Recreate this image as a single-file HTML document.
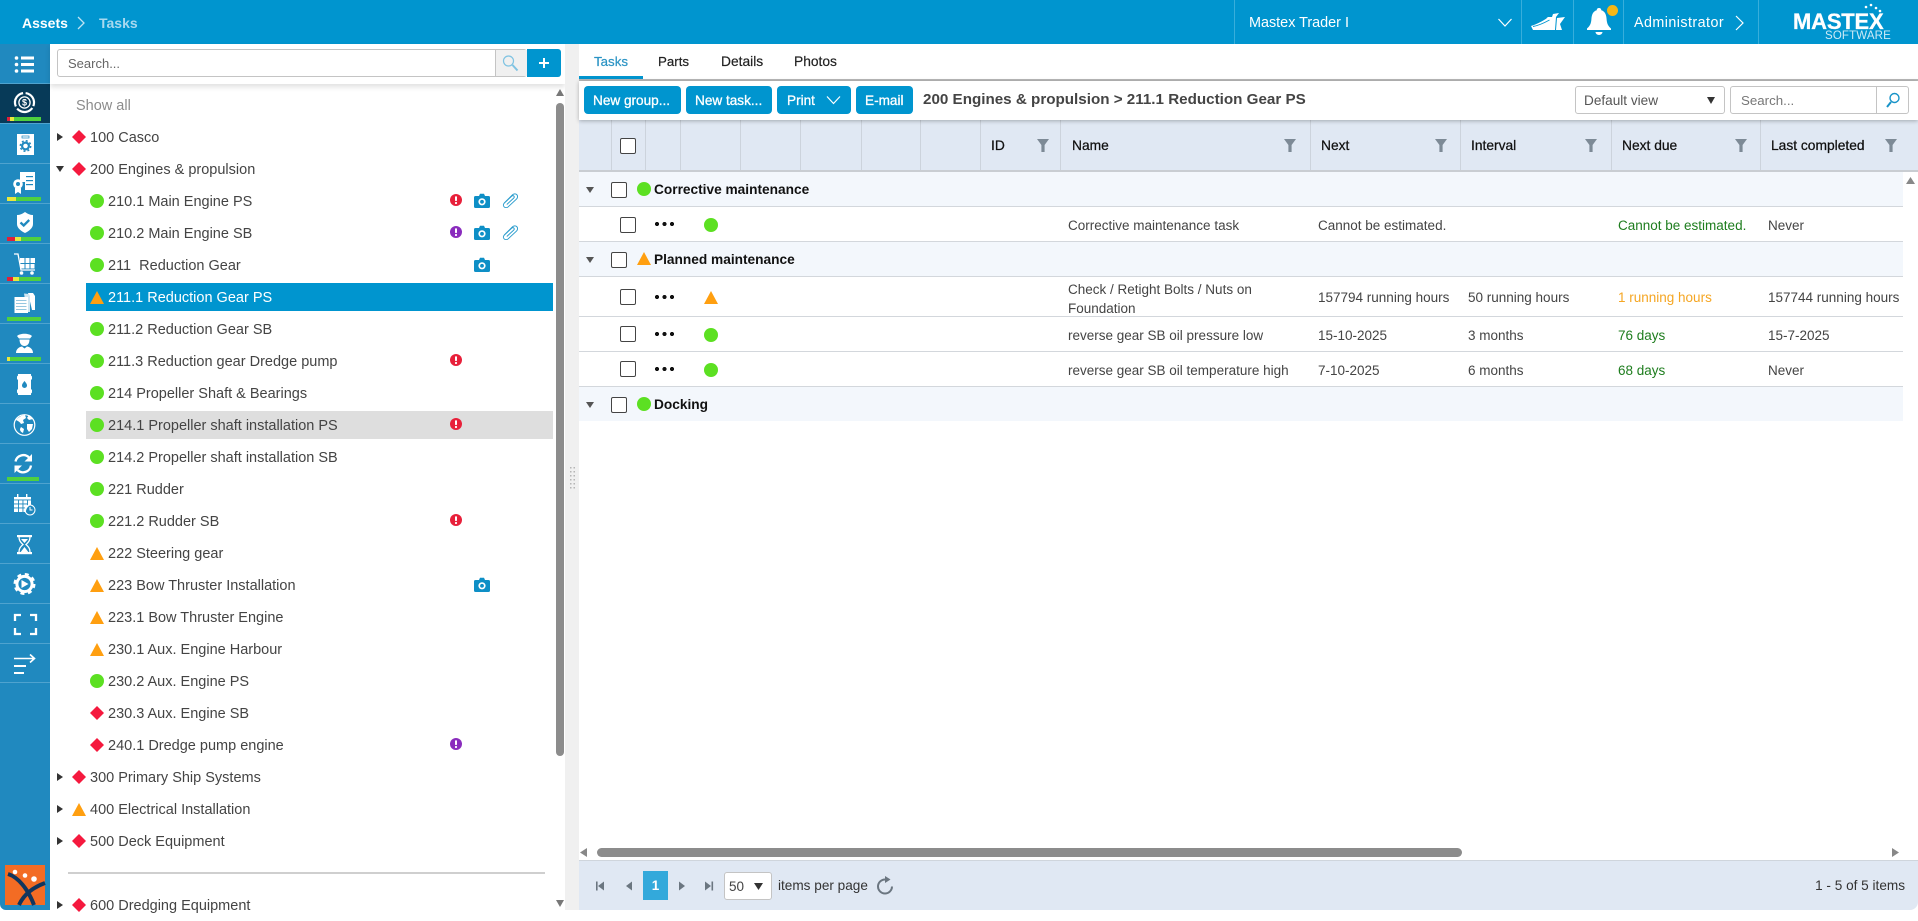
<!DOCTYPE html>
<html lang="en">
<head>
<meta charset="utf-8">
<title>Assets - Tasks</title>
<style>
*{box-sizing:border-box}
html,body{margin:0;padding:0;width:1918px;height:910px;overflow:hidden;background:#fff;font-family:"Liberation Sans",sans-serif;color:#444}
.a{position:absolute}
.t{position:absolute;white-space:nowrap;height:20px;line-height:20px}
.row{position:absolute;left:0;width:560px;height:32px;font-size:14.5px;color:#444}
.row span{position:absolute;left:108px;top:7px;line-height:20px;white-space:nowrap}
.row.root span{left:90px}
.row i{position:absolute;left:90px;top:9px;width:14px;height:14px;display:block}
.row.root i{left:72px}
.row i.o{top:10px;height:13px}
.g{background:#5ce022;border-radius:50%}
.o{background:#ff9f10;clip-path:polygon(50% 0,100% 100%,0 100%)}
.d{background:#f5193e;clip-path:polygon(50% 0,100% 50%,50% 100%,0 50%)}
.row b{position:absolute;left:57px;top:12px;width:6px;height:8px;background:#333;clip-path:polygon(0 0,100% 50%,0 100%)}
.row b.x{left:56px;top:13px;width:8px;height:6px;clip-path:polygon(0 0,100% 0,50% 100%)}
.row svg{position:absolute}
.ex{left:450px;top:9px;width:12px;height:12px}
.cam{left:474px;top:8px;width:16px;height:15px}
.clip{left:502px;top:8px;width:16px;height:15px}
.btn{position:absolute;top:86px;height:28px;background:#0095cf;border-radius:4px;color:#fff;font-size:13.6px;line-height:30px;-webkit-text-stroke:.3px #fff;white-space:nowrap}
.vl{position:absolute;top:120px;width:1px;height:50px;background:#ccd3dc}
.hd{position:absolute;top:136px;font-size:13.8px;line-height:20px;color:#111;-webkit-text-stroke:.25px #111;white-space:nowrap}
.fl{position:absolute;top:139px;width:12px;height:13px}
.cb{position:absolute;width:16px;height:16px;border:1.3px solid #444;border-radius:2px;background:#fff}
.grp{position:absolute;left:579px;width:1324px;background:#f3f7fc;border-bottom:1px solid #d3d7dc}
.line{position:absolute;left:579px;width:1324px;height:1px;background:#d3d7dc}
.gt{position:absolute;left:654px;font-size:13.7px;font-weight:bold;color:#111;line-height:20px;white-space:nowrap}
.c{position:absolute;font-size:13.5px;line-height:19px;color:#444;white-space:nowrap}
.gn{color:#1e7d1e}
.or{color:#f5a623}
.dots{position:absolute;left:655px;width:20px;height:4px;background:radial-gradient(circle at 2px 2px,#111 2px,transparent 2.2px) 0 0/7.5px 4px repeat-x}
.ei{position:absolute;left:704px;width:14px;height:14px}
.ge{position:absolute;left:637px;width:14px;height:14px}
.tri{position:absolute;background:#555;width:8px;height:6px;left:586px;clip-path:polygon(0 0,100% 0,50% 100%)}
.ar{position:absolute;background:#777}
</style>
</head>
<body>
<svg width="0" height="0" style="position:absolute">
<defs>
<symbol id="exr" viewBox="0 0 12 12"><circle cx="6" cy="6" r="6" fill="#e8203a"/><rect x="5" y="2.2" width="2" height="4.8" rx=".8" fill="#fff"/><circle cx="6" cy="9" r="1.1" fill="#fff"/></symbol>
<symbol id="exp" viewBox="0 0 12 12"><circle cx="6" cy="6" r="6" fill="#8a2cbd"/><rect x="5" y="2.2" width="2" height="4.8" rx=".8" fill="#fff"/><circle cx="6" cy="9" r="1.1" fill="#fff"/></symbol>
<symbol id="cam" viewBox="0 0 16 15"><path d="M1.5 3H5L6 .8h4L11 3h3.5A1.5 1.5 0 0 1 16 4.5v9a1.5 1.5 0 0 1-1.5 1.5h-13A1.5 1.5 0 0 1 0 13.5v-9A1.5 1.5 0 0 1 1.5 3z" fill="#0e8fc6"/><circle cx="8" cy="8.8" r="3.6" fill="#fff"/><circle cx="8" cy="8.8" r="1.9" fill="#0e8fc6"/></symbol>
<symbol id="clip" viewBox="0 0 16 15.500"><path d="M2.200 10.200 10.400 2C11.800.6 14 .6 15.100 1.800 16.200 3 16 5 14.600 6.400L6 14.400C4.800 15.400 3 15.400 1.900 14.300.8 13.200 1 11.600 2 10.500L9.800 3.200C10.500 2.600 11.500 2.600 12 3.200 12.500 3.800 12.400 4.700 11.800 5.300L5 11.600" fill="none" stroke="#2a9ccd" stroke-width="1" stroke-linecap="round"/></symbol>
<symbol id="fil" viewBox="0 0 12 13"><path d="M0 0h12L7.6 6v7H4.4V6z" fill="#7d8a96"/></symbol>
</defs>
</svg>

<!-- top bar -->
<div class="a" style="left:0;top:0;width:1918px;height:44px;background:#0095cf"></div>
<div class="t" style="left:22px;top:12.500px;font-size:14px;font-weight:bold;color:#fff">Assets</div>
<svg class="a" style="left:76px;top:15px" width="10" height="16" viewBox="0 0 10 16"><path d="M2 2l6 6-6 6" fill="none" stroke="#bfe3f3" stroke-width="1.3"/></svg>
<div class="t" style="left:99px;top:12.500px;font-size:14px;font-weight:bold;color:#a9d9ef">Tasks</div>
<div class="a" style="left:1234px;top:0;width:1px;height:44px;background:#38aedb"></div>
<div class="a" style="left:1521px;top:0;width:1px;height:44px;background:#38aedb"></div>
<div class="a" style="left:1573px;top:0;width:1px;height:44px;background:#38aedb"></div>
<div class="a" style="left:1623px;top:0;width:1px;height:44px;background:#38aedb"></div>
<div class="a" style="left:1758px;top:0;width:1px;height:44px;background:#38aedb"></div>
<div class="t" style="left:1249px;top:13px;font-size:14.4px;color:#fff">Mastex Trader I</div>
<svg class="a" style="left:1497px;top:17px" width="16" height="11" viewBox="0 0 16 11"><path d="M1.5 2l6.5 7 6.500-7" fill="none" stroke="#fff" stroke-width="1.200"/></svg>
<svg class="a" style="left:1530px;top:12px" width="36" height="20" viewBox="0 0 36 20"><path d="M1 14C7 12 13 9 18 5l4 0 1-3 6-1-3 4-1 13H3z" fill="#fff"/><path d="M27 6l8-1-5 7 2 6h-6z" fill="#fff"/><path d="M3 14.500C9 13.500 14 11 19.500 8M8 10.500C11 9.500 14 7.500 16.500 6" stroke="#0095cf" stroke-width=".9" fill="none"/></svg>
<svg class="a" style="left:1586px;top:7px" width="26" height="29" viewBox="0 0 26 29"><path d="M13 1c1.500 0 2.300 1 2.300 2.200 4 1.200 5 4.800 5.300 9 .3 4.500 1.700 7 4.400 9.300v1.500H1v-1.500c2.700-2.300 4.100-4.800 4.400-9.300.3-4.200 1.300-7.800 5.300-9C10.700 2 11.500 1 13 1z" fill="#fff"/><path d="M9.500 25h7a3.500 3 0 0 1-7 0z" fill="#fff"/></svg>
<div class="a" style="left:1607px;top:5px;width:11px;height:11px;border-radius:50%;background:#f6b716"></div>
<div class="t" style="left:1634px;top:13px;font-size:14.3px;letter-spacing:.45px;color:#fff">Administrator</div>
<svg class="a" style="left:1734px;top:14px" width="12" height="18" viewBox="0 0 12 18"><path d="M2 2l7 7-7 7" fill="none" stroke="#fff" stroke-width="1.200"/></svg>
<div class="a" style="left:1793px;top:10px;font-size:22px;line-height:24px;font-weight:bold;color:#fff;letter-spacing:-.2px;-webkit-text-stroke:.3px #fff;white-space:nowrap">MASTEX</div>
<div class="a" style="left:1825px;top:30px;font-size:11.500px;line-height:13px;color:#cdeaf6;letter-spacing:.15px;white-space:nowrap">SOFTWARE</div>
<svg class="a" style="left:1862px;top:3px" width="22" height="12" viewBox="0 0 22 12"><circle cx="4" cy="4" r="1.300" fill="#fff"/><circle cx="9" cy="2" r="1.300" fill="#fff"/><circle cx="14" cy="5" r="1.300" fill="#fff"/><circle cx="18" cy="8" r="1.300" fill="#fff"/></svg>

<!-- sidebar -->
<svg class="a" style="left:0;top:0" width="50" height="910" viewBox="0 0 50 910">
<path d="M0 44H50V910H6A6 6 0 0 1 0 904z" fill="#2089bf"/>
<rect x="0" y="84" width="50" height="40" fill="#073a58"/>
<g fill="#4fa3cf"><rect y="83" width="50" height="1"/><rect y="123" width="50" height="1"/><rect y="163" width="50" height="1"/><rect y="203" width="50" height="1"/><rect y="243" width="50" height="1"/><rect y="283" width="50" height="1"/><rect y="323" width="50" height="1"/><rect y="363" width="50" height="1"/><rect y="403" width="50" height="1"/><rect y="443" width="50" height="1"/><rect y="483" width="50" height="1"/><rect y="523" width="50" height="1"/><rect y="563" width="50" height="1"/><rect y="603" width="50" height="1"/><rect y="643" width="50" height="1"/><rect y="682" width="50" height="1"/></g>
<!-- status bars -->
<rect x="7" y="117" width="34" height="4" fill="#4fd03f"/><rect x="7" y="117" width="3" height="4" fill="#e0203a"/><rect x="10" y="117" width="4" height="4" fill="#e8e83c"/>
<rect x="7" y="197" width="34" height="4" fill="#4fd03f"/><rect x="7" y="197" width="9" height="4" fill="#e8e83c"/>
<rect x="7" y="237" width="34" height="4" fill="#4fd03f"/><rect x="7" y="237" width="8" height="4" fill="#e0203a"/><rect x="15" y="237" width="6" height="4" fill="#e8e83c"/>
<rect x="7" y="277" width="34" height="4" fill="#4fd03f"/><rect x="7" y="277" width="6" height="4" fill="#e0203a"/><rect x="13" y="277" width="6" height="4" fill="#e8e83c"/>
<rect x="7" y="317" width="34" height="4" fill="#4fd03f"/>
<rect x="7" y="357" width="34" height="4" fill="#4fd03f"/><rect x="7" y="357" width="3" height="4" fill="#e8e83c"/>
<rect x="7" y="477" width="32" height="4" fill="#4fd03f"/>
<!-- list -->
<g fill="#fff"><circle cx="16.500" cy="58" r="1.800"/><circle cx="16.500" cy="64.500" r="1.800"/><circle cx="16.500" cy="71" r="1.800"/><rect x="21" y="56.500" width="13" height="3"/><rect x="21" y="63" width="13" height="3"/><rect x="21" y="69.500" width="13" height="3"/></g>
<!-- asset -->
<circle cx="24.500" cy="102.500" r="9.500" fill="none" stroke="#fff" stroke-width="2.200" stroke-dasharray="17.400 2.500" transform="rotate(35 24.500 102.500)"/>
<circle cx="24.500" cy="102.500" r="5.600" fill="#073a58" stroke="#fff" stroke-width="1.300"/>
<text x="24.500" y="105.700" font-size="9" font-weight="bold" fill="#fff" text-anchor="middle" font-family="Liberation Sans">$</text>
<!-- config doc -->
<rect x="17" y="134" width="17" height="21" fill="#fff"/><rect x="22" y="136" width="7" height="2" fill="none" stroke="#2089bf" stroke-width=".7"/>
<circle cx="25.500" cy="146" r="3.400" fill="none" stroke="#2089bf" stroke-width="2.200"/>
<circle cx="25.500" cy="146" r="5.200" fill="none" stroke="#2089bf" stroke-width="1.500" stroke-dasharray="2 2.100"/>
<!-- certificate -->
<path d="M20 172h15v18H25v-8h-5z" fill="#fff"/><g fill="#2089bf"><rect x="26" y="176" width="7" height="1.200"/><rect x="26" y="180" width="7" height="1.200"/><rect x="26" y="184" width="7" height="1.200"/></g>
<circle cx="18" cy="184" r="4.800" fill="#fff"/><circle cx="18" cy="184" r="2" fill="#2089bf"/><path d="M15 188v6l3-2 3 2v-6z" fill="#fff"/>
<!-- shield -->
<path d="M25 212c3 2 5 3 8 3v9c0 4-4 7-8 9-4-2-8-5-8-9v-9c3 0 5-1 8-3z" fill="#fff"/><path d="M20.500 222.500l3.200 3 5.500-5.500" fill="none" stroke="#2089bf" stroke-width="2.300"/>
<!-- cart -->
<path d="M14 254h4l3 16h14" fill="none" stroke="#fff" stroke-width="1.300"/>
<g fill="#fff"><rect x="20" y="258" width="4.500" height="5"/><rect x="25.500" y="258" width="4" height="5"/><rect x="30.500" y="258" width="4.500" height="5"/><rect x="20.500" y="264" width="4" height="4.500"/><rect x="25.500" y="264" width="4" height="4.500"/><rect x="30.500" y="264" width="4" height="4.500"/><circle cx="21.500" cy="273" r="1.800"/><circle cx="32" cy="273" r="1.800"/></g>
<!-- docs -->
<path d="M28 293h5l2 3v14h-3z" fill="#fff"/><path d="M24 293.500l5 .5 1 2v16h-3z" fill="#cfe6f2"/><rect x="14.500" y="297" width="13.500" height="16" fill="#fff"/>
<g fill="#7db9d9"><rect x="16" y="300" width="10.500" height=".8"/><rect x="16" y="303" width="10.500" height=".8"/><rect x="16" y="306" width="10.500" height=".8"/><rect x="16" y="309" width="10.500" height=".8"/></g>
<!-- crew -->
<path d="M17 336c3-3 12-3 15 0l-2 2.500H19z" fill="#fff"/><path d="M19.500 339.500h10c0 4-2 6.500-5 6.500s-5-2.500-5-6.500z" fill="#fff"/><path d="M16 353c0-4 3-6 6-6.500l2.500 2 2.500-2c3 .5 6 2.500 6 6.500z" fill="#fff"/>
<!-- barrel -->
<path d="M18 374h13v1.500l1 1v3h-1v10h1v3l-1 1V395H18v-1.500l-1-1v-3h1v-10h-1v-3l1-1z" fill="#fff"/><path d="M24.500 381c1.800 2.300 2.500 3.300 2.500 4.500a2.500 2.500 0 0 1-5 0c0-1.200.7-2.200 2.500-4.500z" fill="#2089bf"/>
<!-- globe -->
<circle cx="24.500" cy="425" r="10.300" fill="none" stroke="#fff" stroke-width="1.200"/>
<path d="M16 420c2-2.500 6-5 9-5l1 3-3 2 1 3-3 1c-1-2-3-3-5-4zM27 424h6l-1 5-3 3-2-3zM21 427l3 2-1 4c-2-1-3-2-3-4zM29 415c2 1 3 2 4 4l-4 1-2-2z" fill="#fff"/>
<!-- sync -->
<path d="M15.500 461.500A8 8 0 0 1 29 457.500" fill="none" stroke="#fff" stroke-width="2.300"/><path d="M32 454v7.500h-7.500z" fill="#fff"/>
<path d="M31 465.500A8 8 0 0 1 17.500 470" fill="none" stroke="#fff" stroke-width="2.300"/><path d="M14.500 473v-7.500H22z" fill="#fff"/>
<!-- calendar -->
<path d="M14 497h17v8a7 7 0 0 0-5 7H14z" fill="#fff"/><g fill="#2089bf"><rect x="14" y="499.500" width="17" height=".9"/><rect x="14" y="503.500" width="14" height=".9"/><rect x="14" y="507.500" width="12" height=".9"/><rect x="18" y="499.500" width=".9" height="13"/><rect x="22.500" y="499.500" width=".9" height="13"/><rect x="27" y="499.500" width=".9" height="6"/></g>
<rect x="17" y="494" width="1.400" height="4" fill="#fff"/><rect x="26" y="494" width="1.400" height="4" fill="#fff"/>
<circle cx="30" cy="510" r="5" fill="none" stroke="#fff" stroke-width="1"/><path d="M30 507v3h2.500" stroke="#fff" fill="none" stroke-width="1"/>
<!-- hourglass -->
<rect x="17" y="535" width="15" height="2.200" fill="#fff"/><rect x="17" y="552" width="15" height="2.200" fill="#fff"/>
<path d="M19 537c0 4 2 5.500 4 7.500-2 2-4 3.500-4 7.500M30 537c0 4-2 5.500-4 7.500 2 2 4 3.500 4 7.500" fill="none" stroke="#fff" stroke-width="1.300"/>
<path d="M24.500 547l-3.800 5h7.600zM21 539h7l-3.500 4z" fill="#fff"/>
<!-- gear -->
<circle cx="24.500" cy="584" r="7.600" fill="none" stroke="#fff" stroke-width="3"/><circle cx="24.500" cy="584" r="9.800" fill="none" stroke="#fff" stroke-width="2.400" stroke-dasharray="4 3.700"/><path d="M21.500 580l7 4-7 4z" fill="#fff"/>
<!-- fullscreen -->
<path d="M15 621v-6h6M30 615h6v6M36 628v6h-6M21 634h-6v-6" fill="none" stroke="#fff" stroke-width="2.300"/>
<!-- collapse -->
<g fill="#fff"><rect x="14" y="665" width="12" height="2"/><rect x="14" y="672" width="10" height="2"/></g>
<path d="M14 658.500H34M30 654.500l4.500 4-4.500 4" fill="none" stroke="#fff" stroke-width="1.600"/>
<!-- logo -->
<rect x="5" y="865" width="40" height="40" fill="#f36c24"/>
<circle cx="15" cy="872" r="2.300" fill="#fff"/><circle cx="25" cy="875.500" r="2.300" fill="#fff"/><circle cx="34" cy="879" r="2.800" fill="#fff"/>
<path d="M8 874c10 3 20 15 26 31M45 883c-11 4-21 11-26 22" fill="none" stroke="#11365e" stroke-width="4"/>
</svg>

<!-- tree panel -->
<div class="a" style="left:50px;top:44px;width:515px;height:40px;box-shadow:0 3px 5px rgba(0,0,0,.12);background:#fff"></div>
<div class="a" style="left:57px;top:49px;width:470px;height:28px;border:1px solid #c4c4c4;border-radius:3px;background:#fff"></div>
<div class="t" style="left:68px;top:54px;font-size:13px;color:#666">Search...</div>
<div class="a" style="left:495px;top:50px;width:32px;height:26px;background:#f0f0f0;border-left:1px solid #c4c4c4"></div>
<svg class="a" style="left:502px;top:54px" width="17" height="18" viewBox="0 0 17 18"><circle cx="6.500" cy="7" r="5" fill="none" stroke="#7fc3e2" stroke-width="1.200"/><path d="M10.500 11l5 5.500" stroke="#7fc3e2" stroke-width="2"/></svg>
<div class="a" style="left:527px;top:49px;width:34px;height:28px;background:#0095cf;border-radius:0 3px 3px 0"></div>
<div class="a" style="left:539px;top:62px;width:10px;height:2px;background:#fff"></div>
<div class="a" style="left:543px;top:58px;width:2px;height:10px;background:#fff"></div>

<div class="a" style="left:86px;top:283px;width:467px;height:28px;background:#0095cf"></div>
<div class="a" style="left:86px;top:411px;width:467px;height:28px;background:#dedede"></div>

<div class="t" style="left:76px;top:96px;font-size:14.500px;color:#8c8c8c">Show all</div>

<div class="row root" style="top:121px"><b></b><i class="d"></i><span>100 Casco</span></div>
<div class="row root" style="top:153px"><b class="x"></b><i class="d"></i><span>200 Engines &amp; propulsion</span></div>
<div class="row" style="top:185px"><i class="g"></i><span>210.1 Main Engine PS</span><svg class="ex"><use href="#exr"/></svg><svg class="cam"><use href="#cam"/></svg><svg class="clip"><use href="#clip"/></svg></div>
<div class="row" style="top:217px"><i class="g"></i><span>210.2 Main Engine SB</span><svg class="ex"><use href="#exp"/></svg><svg class="cam"><use href="#cam"/></svg><svg class="clip"><use href="#clip"/></svg></div>
<div class="row" style="top:249px"><i class="g"></i><span>211&nbsp; Reduction Gear</span><svg class="cam"><use href="#cam"/></svg></div>
<div class="row" style="top:281px;color:#fff"><i class="o"></i><span>211.1 Reduction Gear PS</span></div>
<div class="row" style="top:313px"><i class="g"></i><span>211.2 Reduction Gear SB</span></div>
<div class="row" style="top:345px"><i class="g"></i><span>211.3 Reduction gear Dredge pump</span><svg class="ex"><use href="#exr"/></svg></div>
<div class="row" style="top:377px"><i class="g"></i><span>214 Propeller Shaft &amp; Bearings</span></div>
<div class="row" style="top:409px"><i class="g"></i><span>214.1 Propeller shaft installation PS</span><svg class="ex"><use href="#exr"/></svg></div>
<div class="row" style="top:441px"><i class="g"></i><span>214.2 Propeller shaft installation SB</span></div>
<div class="row" style="top:473px"><i class="g"></i><span>221 Rudder</span></div>
<div class="row" style="top:505px"><i class="g"></i><span>221.2 Rudder SB</span><svg class="ex"><use href="#exr"/></svg></div>
<div class="row" style="top:537px"><i class="o"></i><span>222 Steering gear</span></div>
<div class="row" style="top:569px"><i class="o"></i><span>223 Bow Thruster Installation</span><svg class="cam"><use href="#cam"/></svg></div>
<div class="row" style="top:601px"><i class="o"></i><span>223.1 Bow Thruster Engine</span></div>
<div class="row" style="top:633px"><i class="o"></i><span>230.1 Aux. Engine Harbour</span></div>
<div class="row" style="top:665px"><i class="g"></i><span>230.2 Aux. Engine PS</span></div>
<div class="row" style="top:697px"><i class="d"></i><span>230.3 Aux. Engine SB</span></div>
<div class="row" style="top:729px"><i class="d"></i><span>240.1 Dredge pump engine</span><svg class="ex"><use href="#exp"/></svg></div>
<div class="row root" style="top:761px"><b></b><i class="d"></i><span>300 Primary Ship Systems</span></div>
<div class="row root" style="top:793px"><b></b><i class="o"></i><span>400 Electrical Installation</span></div>
<div class="row root" style="top:825px"><b></b><i class="d"></i><span>500 Deck Equipment</span></div>
<div class="a" style="left:68px;top:872px;width:477px;height:2px;background:#cfcfcf"></div>
<div class="row root" style="top:889px"><b></b><i class="d"></i><span>600 Dredging Equipment</span></div>

<div class="a" style="left:556px;top:103px;width:8px;height:653px;background:#8c8c8c;border-radius:4px"></div>
<div class="ar" style="left:556px;top:89px;width:8px;height:7px;clip-path:polygon(50% 0,100% 100%,0 100%)"></div>
<div class="ar" style="left:556px;top:900px;width:8px;height:7px;clip-path:polygon(0 0,100% 0,50% 100%)"></div>

<!-- splitter -->
<div class="a" style="left:565px;top:44px;width:14px;height:866px;background:#f0f0f0"></div>
<svg class="a" style="left:570px;top:467px" width="6" height="26" viewBox="0 0 6 26"><g fill="#b5b5b5"><rect x="0" y="0" width="1.500" height="1.500"/><rect x="3.500" y="0" width="1.500" height="1.500"/><rect x="0" y="4" width="1.500" height="1.500"/><rect x="3.500" y="4" width="1.500" height="1.500"/><rect x="0" y="8" width="1.500" height="1.500"/><rect x="3.500" y="8" width="1.500" height="1.500"/><rect x="0" y="12" width="1.500" height="1.500"/><rect x="3.500" y="12" width="1.500" height="1.500"/><rect x="0" y="16" width="1.500" height="1.500"/><rect x="3.500" y="16" width="1.500" height="1.500"/><rect x="0" y="20" width="1.500" height="1.500"/><rect x="3.500" y="20" width="1.500" height="1.500"/></g></svg>

<!-- tabs -->
<div class="t" style="left:594px;top:52px;font-size:13.300px;color:#2a93c4;-webkit-text-stroke:.2px #2a93c4">Tasks</div>
<div class="t" style="left:658px;top:52px;font-size:13.300px;color:#222;-webkit-text-stroke:.2px #222">Parts</div>
<div class="t" style="left:721px;top:52px;font-size:13.800px;color:#222;-webkit-text-stroke:.2px #222">Details</div>
<div class="t" style="left:794px;top:52px;font-size:13.800px;color:#222;-webkit-text-stroke:.2px #222">Photos</div>
<div class="a" style="left:579px;top:79px;width:1339px;height:2px;background:#b9b9b9"></div>
<div class="a" style="left:579px;top:76px;width:64px;height:3px;background:#0095cf"></div>

<!-- table header -->
<div class="a" style="left:579px;top:120px;width:1339px;height:50px;background:#e0e8f3"></div>
<div class="a" style="left:579px;top:170px;width:1339px;height:2px;background:#c9cdd2"></div>
<div class="vl" style="left:611px"></div><div class="vl" style="left:645px"></div><div class="vl" style="left:680px"></div><div class="vl" style="left:740px"></div><div class="vl" style="left:800px"></div><div class="vl" style="left:861px"></div><div class="vl" style="left:920px"></div><div class="vl" style="left:980px"></div><div class="vl" style="left:1060px"></div><div class="vl" style="left:1310px"></div><div class="vl" style="left:1460px"></div><div class="vl" style="left:1611px"></div><div class="vl" style="left:1760px"></div>
<div class="cb" style="left:620px;top:138px"></div>
<div class="hd" style="left:991px">ID</div><svg class="fl" style="left:1037px"><use href="#fil"/></svg>
<div class="hd" style="left:1072px">Name</div><svg class="fl" style="left:1284px"><use href="#fil"/></svg>
<div class="hd" style="left:1321px">Next</div><svg class="fl" style="left:1435px"><use href="#fil"/></svg>
<div class="hd" style="left:1471px">Interval</div><svg class="fl" style="left:1585px"><use href="#fil"/></svg>
<div class="hd" style="left:1622px">Next due</div><svg class="fl" style="left:1735px"><use href="#fil"/></svg>
<div class="hd" style="left:1771px">Last completed</div><svg class="fl" style="left:1885px"><use href="#fil"/></svg>

<!-- toolbar -->
<div class="a" style="left:579px;top:81px;width:1339px;height:39px;background:#fff;box-shadow:0 1px 4px rgba(0,0,0,.28)"></div>
<div class="btn" style="left:584px;width:97px;padding-left:9px">New group...</div>
<div class="btn" style="left:686px;width:86px;padding-left:9px">New task...</div>
<div class="btn" style="left:777px;width:74px;padding-left:10px">Print</div>
<svg class="a" style="left:826px;top:95px" width="15" height="10" viewBox="0 0 15 10"><path d="M1 1.500l6.500 7 6.500-7" fill="none" stroke="#fff" stroke-width="1.200"/></svg>
<div class="btn" style="left:856px;width:57px;padding-left:9px">E-mail</div>
<div class="t" style="left:923px;top:90px;font-size:15.200px;font-weight:bold;color:#444">200 Engines &amp; propulsion &gt; 211.1 Reduction Gear PS</div>
<div class="a" style="left:1575px;top:86px;width:150px;height:28px;border:1px solid #c4c4c4;border-radius:3px;background:#fff"></div>
<div class="t" style="left:1584px;top:91px;font-size:13.600px;color:#555">Default view</div>
<div class="a" style="left:1707px;top:97px;width:8px;height:7px;background:#333;clip-path:polygon(0 0,100% 0,50% 100%)"></div>
<div class="a" style="left:1730px;top:86px;width:179px;height:28px;border:1px solid #c4c4c4;border-radius:3px;background:#fff"></div>
<div class="a" style="left:1876px;top:87px;width:1px;height:26px;background:#c4c4c4"></div>
<div class="t" style="left:1741px;top:91px;font-size:13.300px;color:#777">Search...</div>
<svg class="a" style="left:1885px;top:92px" width="16" height="17" viewBox="0 0 16 17"><circle cx="9.500" cy="6" r="4.500" fill="none" stroke="#1893c8" stroke-width="1.400"/><path d="M6 10l-4 5" stroke="#1893c8" stroke-width="2"/></svg>

<!-- groups and rows -->
<div class="grp" style="top:172px;height:35px"></div>
<div class="tri" style="top:187px"></div><div class="cb" style="left:611px;top:182px"></div><div class="ge g" style="top:182px"></div>
<div class="gt" style="top:180px">Corrective maintenance</div>
<div class="cb" style="left:620px;top:217px"></div><div class="dots" style="top:222px"></div><div class="ei g" style="top:218px"></div>
<div class="c" style="left:1068px;top:216px">Corrective maintenance task</div>
<div class="c" style="left:1318px;top:216px">Cannot be estimated.</div>
<div class="c gn" style="left:1618px;top:216px">Cannot be estimated.</div>
<div class="c" style="left:1768px;top:216px">Never</div>
<div class="line" style="top:241px"></div>

<div class="grp" style="top:242px;height:35px"></div>
<div class="tri" style="top:257px"></div><div class="cb" style="left:611px;top:252px"></div><div class="ge o" style="top:252px;height:13px"></div>
<div class="gt" style="top:250px">Planned maintenance</div>

<div class="cb" style="left:620px;top:289px"></div><div class="dots" style="top:295px"></div><div class="ei o" style="top:291px;height:13px"></div>
<div class="c" style="left:1068px;top:279.500px">Check / Retight Bolts / Nuts on<br>Foundation</div>
<div class="c" style="left:1318px;top:288px">157794 running hours</div>
<div class="c" style="left:1468px;top:288px">50 running hours</div>
<div class="c or" style="left:1618px;top:288px">1 running hours</div>
<div class="c" style="left:1768px;top:288px">157744 running hours</div>
<div class="line" style="top:316px"></div>

<div class="cb" style="left:620px;top:326px"></div><div class="dots" style="top:332px"></div><div class="ei g" style="top:328px"></div>
<div class="c" style="left:1068px;top:326px">reverse gear SB oil pressure low</div>
<div class="c" style="left:1318px;top:326px">15-10-2025</div>
<div class="c" style="left:1468px;top:326px">3 months</div>
<div class="c gn" style="left:1618px;top:326px">76 days</div>
<div class="c" style="left:1768px;top:326px">15-7-2025</div>
<div class="line" style="top:351px"></div>

<div class="cb" style="left:620px;top:361px"></div><div class="dots" style="top:367px"></div><div class="ei g" style="top:363px"></div>
<div class="c" style="left:1068px;top:361px">reverse gear SB oil temperature high</div>
<div class="c" style="left:1318px;top:361px">7-10-2025</div>
<div class="c" style="left:1468px;top:361px">6 months</div>
<div class="c gn" style="left:1618px;top:361px">68 days</div>
<div class="c" style="left:1768px;top:361px">Never</div>
<div class="line" style="top:386px"></div>

<div class="a" style="left:579px;top:387px;width:1324px;height:34px;background:#f3f7fc"></div>
<div class="tri" style="top:402px"></div><div class="cb" style="left:611px;top:397px"></div><div class="ge g" style="top:397px"></div>
<div class="gt" style="top:395px">Docking</div>

<!-- v scroll arrow -->
<div class="ar" style="left:1906px;top:177px;width:9px;height:7px;background:#888;clip-path:polygon(50% 0,100% 100%,0 100%)"></div>

<!-- h scroll -->
<div class="ar" style="left:580px;top:848px;width:7px;height:9px;background:#888;clip-path:polygon(100% 0,100% 100%,0 50%)"></div>
<div class="a" style="left:597px;top:848px;width:865px;height:9px;background:#8c8c8c;border-radius:4.500px"></div>
<div class="ar" style="left:1892px;top:848px;width:7px;height:9px;background:#888;clip-path:polygon(0 0,100% 50%,0 100%)"></div>

<!-- footer -->
<div class="a" style="left:579px;top:860px;width:1339px;height:50px;background:#e0e8f3;border-top:1px solid #cfd5dc;border-radius:0 0 8px 0"></div>
<svg class="a" style="left:596px;top:880px" width="124" height="12" viewBox="0 0 124 12"><g fill="#6b7680"><rect x="0" y="1.500" width="1.600" height="9"/><path d="M8 1.500v9L2 6z"/><path d="M36 1.500v9L30 6z"/><path d="M83 1.500v9L89 6z"/><path d="M109 1.500v9L115 6z"/><rect x="115.500" y="1.500" width="1.600" height="9"/></g></svg>
<div class="a" style="left:643px;top:871px;width:25px;height:29px;background:#33a9db;color:#fff;font-size:13.500px;font-weight:bold;line-height:29px;text-align:center">1</div>
<div class="a" style="left:724px;top:872px;width:48px;height:28px;border:1px solid #c4c4c4;border-radius:3px;background:#fff"></div>
<div class="t" style="left:729px;top:877px;font-size:13.500px;color:#444">50</div>
<div class="a" style="left:754px;top:883px;width:9px;height:7px;background:#333;clip-path:polygon(0 0,100% 0,50% 100%)"></div>
<div class="t" style="left:778px;top:876px;font-size:13.600px;color:#333">items per page</div>
<svg class="a" style="left:876px;top:875px" width="18" height="20" viewBox="0 0 18 20"><path d="M9 4.500A7 7 0 1 0 16 11.500" fill="none" stroke="#6b7680" stroke-width="2"/><path d="M9 1l5.500 3.500L9 8z" fill="#6b7680"/></svg>
<div class="t" style="right:13px;top:876px;font-size:13.600px;color:#333">1 - 5 of 5 items</div>
</body>
</html>
